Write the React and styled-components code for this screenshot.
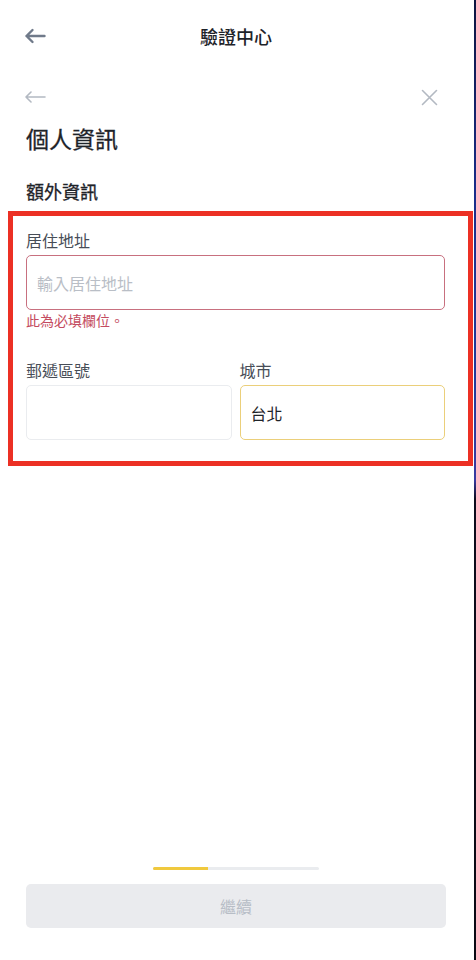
import styled, { createGlobalStyle } from "styled-components";

const GlobalStyle = createGlobalStyle`
  * { box-sizing: border-box; }
  body {
    margin: 0;
    background: #ffffff;
    font-family: "Noto Sans CJK TC", "Noto Sans", sans-serif;
    color: #1e2329;
  }
`;

const ArrowIcon = ({ light }) =>
  light ? (
    <svg width="22" height="12" viewBox="0 0 22 12" fill="none">
      <path d="M21 6H2M7 1L2 6l5 5" stroke="#b3b9c2" strokeWidth="1.6" strokeLinecap="round" strokeLinejoin="round" />
    </svg>
  ) : (
    <svg width="22" height="16" viewBox="0 0 22 16" fill="none">
      <path d="M20.5 8H2.5M8.5 2L2.5 8l6 6" stroke="#707a8a" strokeWidth="2.4" strokeLinecap="round" strokeLinejoin="round" />
    </svg>
  );

const CloseIcon = () => (
  <svg width="17" height="17" viewBox="0 0 17 17" fill="none">
    <path d="M1.5 1.5l14 14M15.5 1.5l-14 14" stroke="#b3b9c2" strokeWidth="1.6" strokeLinecap="round" />
  </svg>
);

export default function App() {
  return (
    <>
      <GlobalStyle />
      <Screen>
        <Main>
          <TopBar>
            <IconButton>
              <ArrowIcon />
            </IconButton>
            <PageTitle>驗證中心</PageTitle>
            <span />
          </TopBar>
          <SubBar>
            <IconButton>
              <ArrowIcon light />
            </IconButton>
            <IconButton>
              <CloseIcon />
            </IconButton>
          </SubBar>
          <Heading>個人資訊</Heading>
          <SectionTitle>額外資訊</SectionTitle>
          <Highlight>
            <Field>
              <Label>居住地址</Label>
              <Input $state="error">
                <Placeholder>輸入居住地址</Placeholder>
              </Input>
              <ErrorText>此為必填欄位。</ErrorText>
            </Field>
            <FieldRow>
              <Field>
                <Label>郵遞區號</Label>
                <Input />
              </Field>
              <Field>
                <Label>城市</Label>
                <Input $state="focus">
                  <Value>台北</Value>
                </Input>
              </Field>
            </FieldRow>
          </Highlight>
          <Footer>
            <Progress>
              <ProgressFill style={{ width: `${(55 / 166) * 100}%` }} />
            </Progress>
            <ContinueButton>繼續</ContinueButton>
          </Footer>
        </Main>
        <EdgeStrip />
      </Screen>
    </>
  );
}

const Screen = styled.div`
  display: flex;
  width: 476px;
  height: 960px;
`;

const Main = styled.main`
  flex: 1;
  display: flex;
  flex-direction: column;
  background: #fff;
`;

const EdgeStrip = styled.div`
  width: 2px;
  background: linear-gradient(
    180deg,
    #0d1540 0%,
    #1a2d8a 20%,
    #213a9a 40%,
    #3a3aa0 50%,
    #0c0c1c 52%,
    #0a0a14 100%
  );
`;

const TopBar = styled.header`
  height: 72px;
  display: grid;
  grid-template-columns: 1fr auto 1fr;
  align-items: center;
  padding: 0 24px;
`;

const IconButton = styled.span`
  display: flex;
  align-items: center;
  justify-content: center;
  width: 22px;
  height: 22px;
`;

const PageTitle = styled.h1`
  margin: 0;
  font-size: 18px;
  font-weight: 500;
  line-height: 26px;
  color: #1e2329;
  transform: translateX(-1px);
`;

const SubBar = styled.div`
  height: 50px;
  display: flex;
  align-items: center;
  justify-content: space-between;
  padding: 0 34px 0 24px;
`;

const Heading = styled.h2`
  margin: 1px 0 0;
  padding: 0 26px;
  font-size: 23px;
  font-weight: 400;
  line-height: 30px;
  color: #1e2329;
  -webkit-text-stroke: 0.3px #1e2329;
`;

const SectionTitle = styled.h3`
  margin: 25px 0 0;
  padding: 0 26px;
  font-size: 18px;
  font-weight: 400;
  line-height: 26px;
  color: #1e2329;
  -webkit-text-stroke: 0.3px #1e2329;
`;

const Highlight = styled.section`
  margin: 7px 1px 0 8px;
  border: 5px solid #ec3024;
  padding: 13px 23px 21px 13px;
  display: flex;
  flex-direction: column;
  gap: 29px;
`;

const Field = styled.div`
  display: flex;
  flex-direction: column;
  min-width: 0;
`;

const FieldRow = styled.div`
  display: grid;
  grid-template-columns: 1fr 1fr;
  gap: 8px;
`;

const Label = styled.label`
  font-size: 16px;
  line-height: 22px;
  color: #474d57;
  margin-bottom: 4px;
`;

const borders = {
  error: "#c8707f",
  focus: "#ebcf7a",
};

const Input = styled.div`
  height: 55px;
  border: 1px solid ${(p) => borders[p.$state] || "#eaecef"};
  border-radius: 5px;
  display: flex;
  align-items: center;
  padding: 0 10px;
  font-size: 16px;
`;

const Placeholder = styled.span`
  color: #b9bec6;
`;

const Value = styled.span`
  color: #1e2329;
`;

const ErrorText = styled.p`
  margin: 0;
  font-size: 14px;
  line-height: 20px;
  color: #c44b60;
`;

const Footer = styled.footer`
  margin-top: auto;
  padding: 0 28px 32px 26px;
  display: flex;
  flex-direction: column;
  align-items: center;
  gap: 14px;
`;

const Progress = styled.div`
  width: 166px;
  height: 3px;
  background: #eaecef;
  border-radius: 2px;
  overflow: hidden;
`;

const ProgressFill = styled.div`
  height: 100%;
  background: #f0c93e;
`;

const ContinueButton = styled.button`
  width: 100%;
  height: 44px;
  border: none;
  border-radius: 5px;
  background: #eaebee;
  color: #b7bdc6;
  font-family: inherit;
  font-size: 16px;
`;
